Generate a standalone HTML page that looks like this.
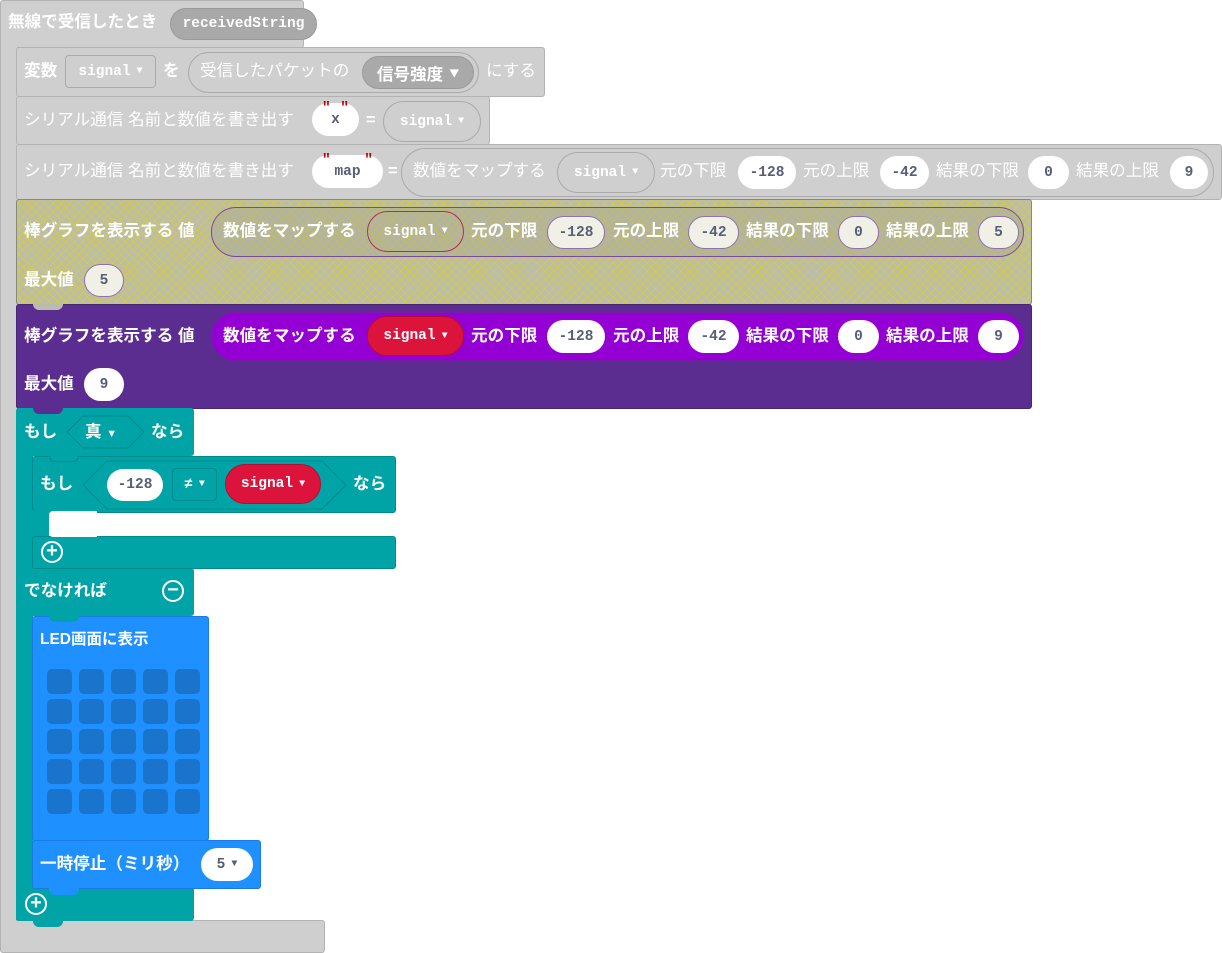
<!DOCTYPE html>
<html><head><meta charset="utf-8"><style>
body{margin:0;width:1222px;height:953px;background:#fff;position:relative;overflow:hidden;font-family:"Liberation Sans","Noto Sans CJK JP",sans-serif}
div{position:absolute;box-sizing:border-box}
.t{color:#fff;font-weight:bold;font-size:16.6px;line-height:20px;height:20px;white-space:nowrap}
.g{background:#cfcfcf;border:1px solid #b3b3b3;border-radius:3px}
.p{border-radius:18px;font-family:"Liberation Mono",monospace;font-weight:bold;font-size:14.5px;color:#575e75;text-align:center;display:flex;align-items:center;justify-content:center;white-space:nowrap}
.p i{font-style:normal;font-size:10px;margin-left:6px}
.w{background:#fff}
.n{background:#cfcfcf;height:6px;width:32px;border-radius:0 0 6px 6px}
.c{width:25px;height:25px;background:#1b74cc;border-radius:5px}
.pl{width:22px;height:22px;border:2px solid #fff;border-radius:50%;color:#fff;font-weight:bold;font-size:20px;line-height:17px;text-align:center}
.hatch{background-color:#bcbcae;background-image:repeating-linear-gradient(45deg,rgba(215,210,40,.75) 0 1px,transparent 1px 6px),repeating-linear-gradient(-45deg,rgba(215,210,40,.75) 0 1px,transparent 1px 6px)}
</style></head><body>
<!-- outer gray -->
<div class="g" style="left:0;top:0;width:304px;height:48px"></div>
<div style="left:0;top:30px;width:17px;height:900px;background:#cfcfcf;border-left:1px solid #b3b3b3"></div>
<div class="g" style="left:0;top:920px;width:325px;height:33px"></div>
<div style="left:1px;top:900px;width:15px;height:30px;background:#cfcfcf"></div>
<div class="t" style="left:8px;top:12px">無線で受信したとき</div>
<div class="p" style="left:170px;top:8px;width:147px;height:32px;background:#a9a9a9;color:#fff;border:1px solid #999">receivedString</div>

<!-- row1 -->
<div class="g" style="left:16px;top:47px;width:529px;height:50px"></div>
<div class="t" style="left:24px;top:61px">変数</div>
<div class="p" style="left:65px;top:55px;width:91px;height:33px;background:#cfcfcf;border:1px solid #aaa;border-radius:4px;color:#fff">signal<i>▼</i></div>
<div class="t" style="left:163px;top:61px">を</div>
<div class="p" style="left:188px;top:52px;width:291px;height:41px;background:#cfcfcf;border:1px solid #aaa;border-radius:21px"></div>
<div class="t" style="left:200px;top:61px;font-weight:normal">受信したパケットの</div>
<div class="p" style="left:362px;top:56px;width:112px;height:33px;background:#a9a9a9;border:1px solid #999;color:#fff;font-family:'Noto Sans CJK JP',sans-serif;font-size:16.6px">信号強度<i>▼</i></div>
<div class="t" style="left:486px;top:61px;font-weight:normal">にする</div>

<!-- row2 -->
<div class="g" style="left:16px;top:96px;width:474px;height:49px"></div>
<div class="t" style="left:24px;top:110px;font-weight:normal">シリアル通信 名前と数値を書き出す</div>
<div class="p w" style="left:312px;top:103px;width:47px;height:33px"><span style="color:#c00;position:absolute;left:10px;top:-2px">"</span>x<span style="color:#c00;position:absolute;right:10px;top:-2px">"</span></div>
<div class="t" style="left:366px;top:110px">=</div>
<div class="p" style="left:383px;top:101px;width:98px;height:41px;background:#cfcfcf;border:1px solid #aaa;color:#fff;border-radius:21px">signal<i>▼</i></div>

<!-- row3 -->
<div class="g" style="left:16px;top:144px;width:1206px;height:56px"></div>
<div class="t" style="left:24px;top:161px;font-weight:normal">シリアル通信 名前と数値を書き出す</div>
<div class="p w" style="left:312px;top:155px;width:71px;height:33px"><span style="color:#c00;position:absolute;left:10px;top:-2px">"</span>map<span style="color:#c00;position:absolute;right:10px;top:-2px">"</span></div>
<div class="t" style="left:388px;top:161px">=</div>
<div class="p" style="left:401px;top:148px;width:813px;height:49px;background:#cfcfcf;border:1px solid #aaa;border-radius:25px"></div>
<div class="t" style="left:413px;top:161px;font-weight:normal">数値をマップする</div>
<div class="p" style="left:557px;top:152px;width:98px;height:41px;background:#cfcfcf;border:1px solid #aaa;color:#fff;border-radius:21px">signal<i>▼</i></div>
<div class="t" style="left:660px;top:161px;font-weight:normal">元の下限</div>
<div class="p w" style="left:738px;top:156px;width:58px;height:33px">-128</div>
<div class="t" style="left:803px;top:161px;font-weight:normal">元の上限</div>
<div class="p w" style="left:880px;top:156px;width:49px;height:33px">-42</div>
<div class="t" style="left:936px;top:161px;font-weight:normal">結果の下限</div>
<div class="p w" style="left:1028px;top:156px;width:41px;height:33px">0</div>
<div class="t" style="left:1076px;top:161px;font-weight:normal">結果の上限</div>
<div class="p w" style="left:1170px;top:156px;width:38px;height:33px">9</div>

<!-- row4 hatched -->
<div class="hatch" style="left:16px;top:199px;width:1016px;height:106px;border:1px solid #8a8a70;border-radius:3px"></div>
<div class="t" style="left:24px;top:221px">棒グラフを表示する 値</div>
<div class="p" style="left:211px;top:207px;width:813px;height:50px;border:1px solid #7a4a9a;border-radius:25px;background:rgba(160,160,150,.35)"></div>
<div class="t" style="left:223px;top:221px">数値をマップする</div>
<div class="p" style="left:367px;top:211px;width:97px;height:41px;border:1px solid #b03050;color:#fff;border-radius:21px">signal<i>▼</i></div>
<div class="t" style="left:471px;top:221px">元の下限</div>
<div class="p" style="left:547px;top:216px;width:58px;height:33px;background:#f0f0e6;border:1px solid #9070b0">-128</div>
<div class="t" style="left:613px;top:221px">元の上限</div>
<div class="p" style="left:688px;top:216px;width:51px;height:33px;background:#f0f0e6;border:1px solid #9070b0">-42</div>
<div class="t" style="left:746px;top:221px">結果の下限</div>
<div class="p" style="left:838px;top:216px;width:41px;height:33px;background:#f0f0e6;border:1px solid #9070b0">0</div>
<div class="t" style="left:886px;top:221px">結果の上限</div>
<div class="p" style="left:978px;top:216px;width:41px;height:33px;background:#f0f0e6;border:1px solid #9070b0">5</div>
<div class="t" style="left:24px;top:270px">最大値</div>
<div class="p" style="left:84px;top:264px;width:40px;height:33px;background:#f0f0e6;border:1px solid #9070b0">5</div>

<!-- row5 purple -->
<div style="left:16px;top:304px;width:1016px;height:105px;background:#5c2d91;border:1px solid #4a2475;border-radius:3px"></div>
<div class="n" style="left:33px;top:304px;background:#bcbcae;width:30px"></div>
<div class="t" style="left:24px;top:326px">棒グラフを表示する 値</div>
<div style="left:211px;top:312px;width:813px;height:49px;background:#9400d3;border:1px solid #7a1aa8;border-radius:25px"></div>
<div class="t" style="left:223px;top:326px">数値をマップする</div>
<div class="p" style="left:367px;top:316px;width:97px;height:40px;background:#dc143c;border:1px solid #b01030;color:#fff;border-radius:20px">signal<i>▼</i></div>
<div class="t" style="left:471px;top:326px">元の下限</div>
<div class="p w" style="left:547px;top:320px;width:58px;height:33px">-128</div>
<div class="t" style="left:613px;top:326px">元の上限</div>
<div class="p w" style="left:688px;top:320px;width:51px;height:33px">-42</div>
<div class="t" style="left:746px;top:326px">結果の下限</div>
<div class="p w" style="left:838px;top:320px;width:41px;height:33px">0</div>
<div class="t" style="left:886px;top:326px">結果の上限</div>
<div class="p w" style="left:978px;top:320px;width:41px;height:33px">9</div>
<div class="t" style="left:24px;top:374px">最大値</div>
<div class="p w" style="left:84px;top:368px;width:40px;height:33px">9</div>

<!-- if block -->
<div style="left:16px;top:408px;width:178px;height:48px;background:#00a4a6;border-radius:3px"></div>
<div style="left:16px;top:440px;width:17px;height:480px;background:#00a4a6"></div>
<div style="left:16px;top:568px;width:178px;height:48px;background:#00a4a6;border-radius:3px"></div>
<div style="left:16px;top:888px;width:178px;height:33px;background:#00a4a6;border-radius:0 0 3px 3px"></div>
<div style="left:33px;top:920px;width:30px;height:7px;background:#00a4a6;border-radius:0 0 6px 6px"></div>
<div class="n" style="left:33px;top:408px;background:#5c2d91;width:30px"></div>
<div class="t" style="left:24px;top:422px">もし</div>
<svg style="position:absolute;left:66px;top:415px" width="80" height="34"><polygon points="1,17 17,1 62,1 78,17 62,33 17,33" fill="#00a4a6" stroke="#008a8c"/></svg>
<div class="t" style="left:85px;top:422px">真 <span style="font-size:11px">▼</span></div>
<div class="t" style="left:151px;top:422px">なら</div>

<!-- inner if -->
<div style="left:32px;top:456px;width:364px;height:57px;background:#00a4a6;border:1px solid #008a8c;border-radius:3px"></div>
<div style="left:32px;top:510px;width:17px;height:30px;background:#00a4a6"></div>
<div style="left:32px;top:536px;width:364px;height:33px;background:#00a4a6;border:1px solid #008a8c;border-radius:3px"></div>
<div style="left:49px;top:511px;width:48px;height:26px;background:#fff;border-radius:4px 0 0 4px"></div>
<div class="n" style="left:49px;top:456px;background:#00a4a6;width:30px;border:1px solid #008a8c;border-top:none"></div>
<div class="t" style="left:40px;top:474px">もし</div>
<svg style="position:absolute;left:82px;top:460px" width="266" height="50"><polygon points="1,25 25,1 240,1 264,25 240,49 25,49" fill="#00a4a6" stroke="#008a8c"/></svg>
<div class="p w" style="left:107px;top:469px;width:56px;height:32px">-128</div>
<div class="p" style="left:172px;top:468px;width:45px;height:33px;border:1px solid #008a8c;border-radius:4px;color:#fff">≠<i>▼</i></div>
<div class="p" style="left:225px;top:464px;width:96px;height:40px;background:#dc143c;border:1px solid #b01030;color:#fff;border-radius:20px">signal<i>▼</i></div>
<div class="t" style="left:353px;top:474px">なら</div>
<div class="pl" style="left:41px;top:541px">+</div>
<div class="t" style="left:24px;top:581px">でなければ</div>
<div class="pl" style="left:162px;top:580px">−</div>

<!-- LED -->
<div style="left:32px;top:616px;width:177px;height:225px;background:#1e90ff;border:1px solid #1a7ae0;border-radius:3px"></div>
<div class="n" style="left:49px;top:616px;background:#00a4a6;width:30px"></div>
<div class="t" style="left:40px;top:630px;font-size:15.5px">LED画面に表示</div>
<div class="c" style="left:47px;top:669px"></div><div class="c" style="left:79px;top:669px"></div><div class="c" style="left:111px;top:669px"></div><div class="c" style="left:143px;top:669px"></div><div class="c" style="left:175px;top:669px"></div>
<div class="c" style="left:47px;top:699px"></div><div class="c" style="left:79px;top:699px"></div><div class="c" style="left:111px;top:699px"></div><div class="c" style="left:143px;top:699px"></div><div class="c" style="left:175px;top:699px"></div>
<div class="c" style="left:47px;top:729px"></div><div class="c" style="left:79px;top:729px"></div><div class="c" style="left:111px;top:729px"></div><div class="c" style="left:143px;top:729px"></div><div class="c" style="left:175px;top:729px"></div>
<div class="c" style="left:47px;top:759px"></div><div class="c" style="left:79px;top:759px"></div><div class="c" style="left:111px;top:759px"></div><div class="c" style="left:143px;top:759px"></div><div class="c" style="left:175px;top:759px"></div>
<div class="c" style="left:47px;top:789px"></div><div class="c" style="left:79px;top:789px"></div><div class="c" style="left:111px;top:789px"></div><div class="c" style="left:143px;top:789px"></div><div class="c" style="left:175px;top:789px"></div>
<div style="left:32px;top:840px;width:229px;height:49px;background:#1e90ff;border:1px solid #1a7ae0;border-radius:3px"></div>
<div style="left:49px;top:888px;width:30px;height:7px;background:#1e90ff;border-radius:0 0 6px 6px"></div>
<div class="t" style="left:40px;top:854px">一時停止（ミリ秒）</div>
<div class="p w" style="left:201px;top:848px;width:52px;height:33px">5<i>▼</i></div>
<div class="pl" style="left:25px;top:893px">+</div>
</body></html>
